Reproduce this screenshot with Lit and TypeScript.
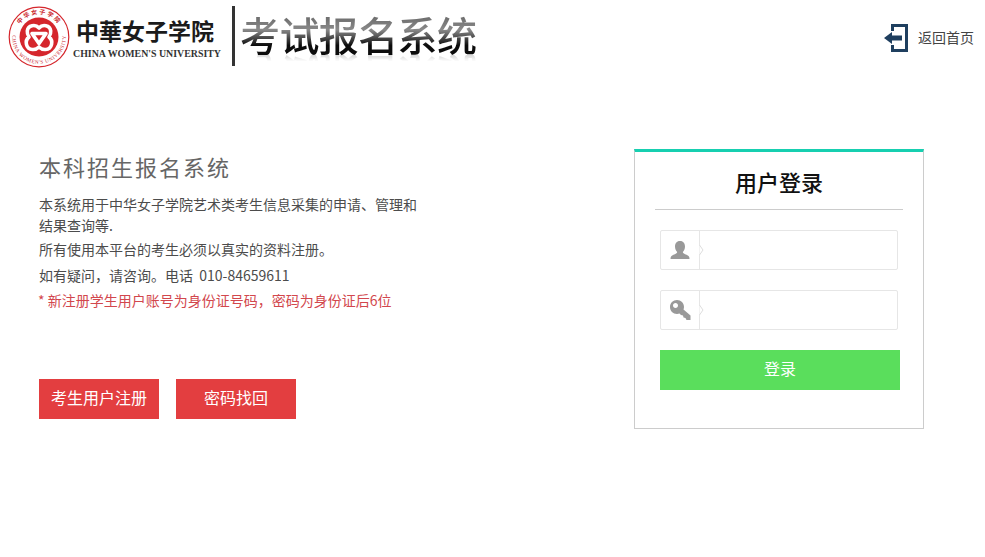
import { LitElement, html, css, svg } from "lit";
import { customElement } from "lit/decorators.js";

const logo = svg`
<svg class="logo" viewBox="0 0 62 62" width="62" height="62">
  <defs>
    <path id="arcTop" d="M31 31 m-23 0 a23 23 0 0 1 46 0"></path>
    <path id="arcBottom" d="M31 31 m-26.8 0 a26.8 26.8 0 0 0 53.6 0"></path>
  </defs>
  <circle cx="31" cy="31" r="29.8" fill="#fff" stroke="#d5262c" stroke-width="1.2"></circle>
  <circle cx="31" cy="31" r="19.5" fill="#d5262c"></circle>
  <text font-size="6" font-weight="700" fill="#c9252b" font-family="Noto Sans CJK SC" letter-spacing="1.6"><textPath href="#arcTop" startOffset="50%" text-anchor="middle">中华女子学院</textPath></text>
  <text font-size="5.2" fill="#c9252b" font-family="Liberation Serif" letter-spacing=".55"><textPath href="#arcBottom" startOffset="50%" text-anchor="middle">CHINA WOMEN'S UNIVERSITY</textPath></text>
  <path d="M31 22 C27.5 18 20 19 19.3 25 C19 27.5 20 29.5 21 31 C16.5 34.5 17.5 43 24.5 43.5 C27 43.7 29.5 42.5 31 41 C32.5 42.5 35 43.7 37.5 43.5 C44.5 43 45.5 34.5 41 31 C42 29.5 43 27.5 42.7 25 C42 19 34.5 18 31 22 Z" fill="none" stroke="#fff" stroke-width="3.6" stroke-linejoin="round"></path>
  <path d="M24 27.5 H38 L31 37.5 Z" fill="none" stroke="#fff" stroke-width="3.6" stroke-linejoin="round"></path>
</svg>`;

@customElement("app-root")
export class AppRoot extends LitElement {
  static styles = css`
    :host { display: block; width: 985px; height: 557px; background: #fff; overflow: hidden; font-family: "Noto Sans CJK SC", "Liberation Sans", sans-serif; color: #444; }
    * { box-sizing: border-box; }
    .header { display: flex; align-items: flex-start; height: 149px; padding: 6px 11px 0 8px; }
    .logo { display: block; flex: none; }
    .brand { margin-left: 6px; width: 150px; padding-top: 9px; flex: none; }
    .brand-cn { font-size: 23px; line-height: 30px; font-weight: 700; color: #1b1b1b; white-space: nowrap; display: flex; justify-content: space-between; width: 137px; }
    .brand-en { font-family: "Liberation Serif", serif; font-weight: 700; font-size: 9.9px; line-height: 12px; color: #333; white-space: nowrap; margin-left: -3px; margin-top: 3px; }
    .divider { flex: none; width: 3px; height: 60px; background: #333; margin-left: 6px; }
    .title { flex: none; margin-left: 5px; margin-top: 2px; font-size: 40px; line-height: 52px; font-weight: 500; letter-spacing: -0.6px; white-space: nowrap; color: transparent; background: linear-gradient(#707070 20%, #8a8a8a 42%, #0c0c0c 72%); -webkit-background-clip: text; background-clip: text; -webkit-box-reflect: below -11px linear-gradient(transparent 76%, rgba(0,0,0,.3)); }
    .home { margin-left: auto; margin-top: 18px; display: flex; align-items: center; gap: 10px; font-size: 14px; line-height: 20px; color: #444; text-decoration: none; }
    .home svg { display: block; }
    .home span { position: relative; top: -1px; }
    .main { display: flex; justify-content: space-between; align-items: flex-start; padding: 0 61px 0 39px; }
    .intro { width: 380px; }
    h1 { margin: 2px 0 0; font-size: 22px; line-height: 30px; font-weight: 400; letter-spacing: 2px; color: #666; }
    .copy { margin-top: 13px; font-size: 14px; line-height: 21px; color: #4c4c4c; }
    .copy p { margin: 0; }
    .copy .second { margin-top: 3px; }
    .copy .third { margin-top: 5px; }
    .notice { margin: 4px 0 0 -1px; font-size: 14px; line-height: 21px; color: #d2474d; }
    .actions { display: flex; gap: 17px; margin-top: 68px; }
    .btn { display: flex; align-items: center; justify-content: center; height: 40px; width: 120px; border: 0; padding: 0 0 5px; font: inherit; font-size: 16px; color: #fff; background: #e33e40; }
    .card { flex: none; width: 290px; height: 280px; border: 1px solid #ccc; border-top: 3px solid #17cfb0; padding: 0 20px 0 25px; }
    .card h2 { margin: 0 0 0 -5px; height: 58px; border-bottom: 1px solid #ccc; text-align: center; font-size: 22px; line-height: 58px; font-weight: 500; color: #111; }
    .field { display: flex; width: 238px; height: 40px; margin-top: 20px; border: 1px solid #e6e6e6; border-radius: 2px; }
    .field-icon { flex: none; width: 39px; height: 100%; border-right: 1px solid #e6e6e6; display: flex; align-items: center; justify-content: center; position: relative; }
    .chev { position: absolute; left: 100%; top: 14px; width: 5px; height: 10px; }
    .field input { flex: 1; min-width: 0; border: 0; outline: 0; background: transparent; }
    .login { width: 240px; height: 40px; margin-top: 20px; border: 0; padding: 0 0 5px; background: #5ade5c; color: #fff; font: inherit; font-size: 16px; display: block; }
  `;

  render() {
    return html`
      <header class="header">
        ${logo}
        <div class="brand">
          <div class="brand-cn"><span>中</span><span>華</span><span>女</span><span>子</span><span>学</span><span>院</span></div>
          <div class="brand-en">CHINA WOMEN'S UNIVERSITY</div>
        </div>
        <div class="divider"></div>
        <div class="title">考试报名系统</div>
        <a class="home">
          <svg width="24" height="28" viewBox="0 0 24 28">
            <path d="M8.5 7 V1.5 H22.5 V26.5 H8.5 V21" fill="none" stroke="#1f3f5f" stroke-width="3"></path>
            <path d="M0 14 L8 8 V11.5 H18 V16.5 H8 V20 Z" fill="#1f3f5f"></path>
          </svg>
          <span>返回首页</span>
        </a>
      </header>
      <main class="main">
        <section class="intro">
          <h1>本科招生报名系统</h1>
          <div class="copy">
            <p>本系统用于中华女子学院艺术类考生信息采集的申请、管理和结果查询等.</p>
            <p class="second">所有使用本平台的考生必须以真实的资料注册。</p>
            <p class="third">如有疑问，请咨询。电话&nbsp; 010-84659611</p>
          </div>
          <p class="notice">* 新注册学生用户账号为身份证号码，密码为身份证后6位</p>
          <div class="actions">
            <button class="btn">考生用户注册</button>
            <button class="btn">密码找回</button>
          </div>
        </section>
        <section class="card">
          <h2>用户登录</h2>
          <div class="field">
            <div class="field-icon">
              <svg width="20" height="18" viewBox="0 0 20 18"><path d="M10 0 C13.5 0 15 2.6 15 5.5 C15 8 14 9.8 12.8 11 C13 12.4 14.5 13 16.5 13.8 C18.5 14.6 19.5 15.5 19.5 18 H0.5 C0.5 15.5 1.5 14.6 3.5 13.8 C5.5 13 7 12.4 7.2 11 C6 9.8 5 8 5 5.5 C5 2.6 6.5 0 10 0 Z" fill="#999"></path></svg>
              <svg class="chev" viewBox="0 0 5 10"><path d="M0.5 0 L4 5 L0.5 10" fill="#fff" stroke="#ddd"></path></svg>
            </div>
            <input type="text" />
          </div>
          <div class="field">
            <div class="field-icon">
              <svg width="21" height="20" viewBox="0 0 21 20"><path fill-rule="evenodd" d="M7 0 C11 0 14 3 14 7 C14 8 13.8 8.8 13.5 9.5 L20.5 15.5 V20 H16.5 L15.5 18 L13.5 17.5 L13 15.5 L11 15 L9.5 13.5 C8.8 13.8 8 14 7 14 C3 14 0 11 0 7 C0 3 3 0 7 0 Z M5.5 3 C4 3 3 4 3 5.5 C3 7 4 8 5.5 8 C7 8 8 7 8 5.5 C8 4 7 3 5.5 3 Z" fill="#999"></path></svg>
              <svg class="chev" viewBox="0 0 5 10"><path d="M0.5 0 L4 5 L0.5 10" fill="#fff" stroke="#ddd"></path></svg>
            </div>
            <input type="password" />
          </div>
          <button class="login">登录</button>
        </section>
      </main>
    `;
  }
}
